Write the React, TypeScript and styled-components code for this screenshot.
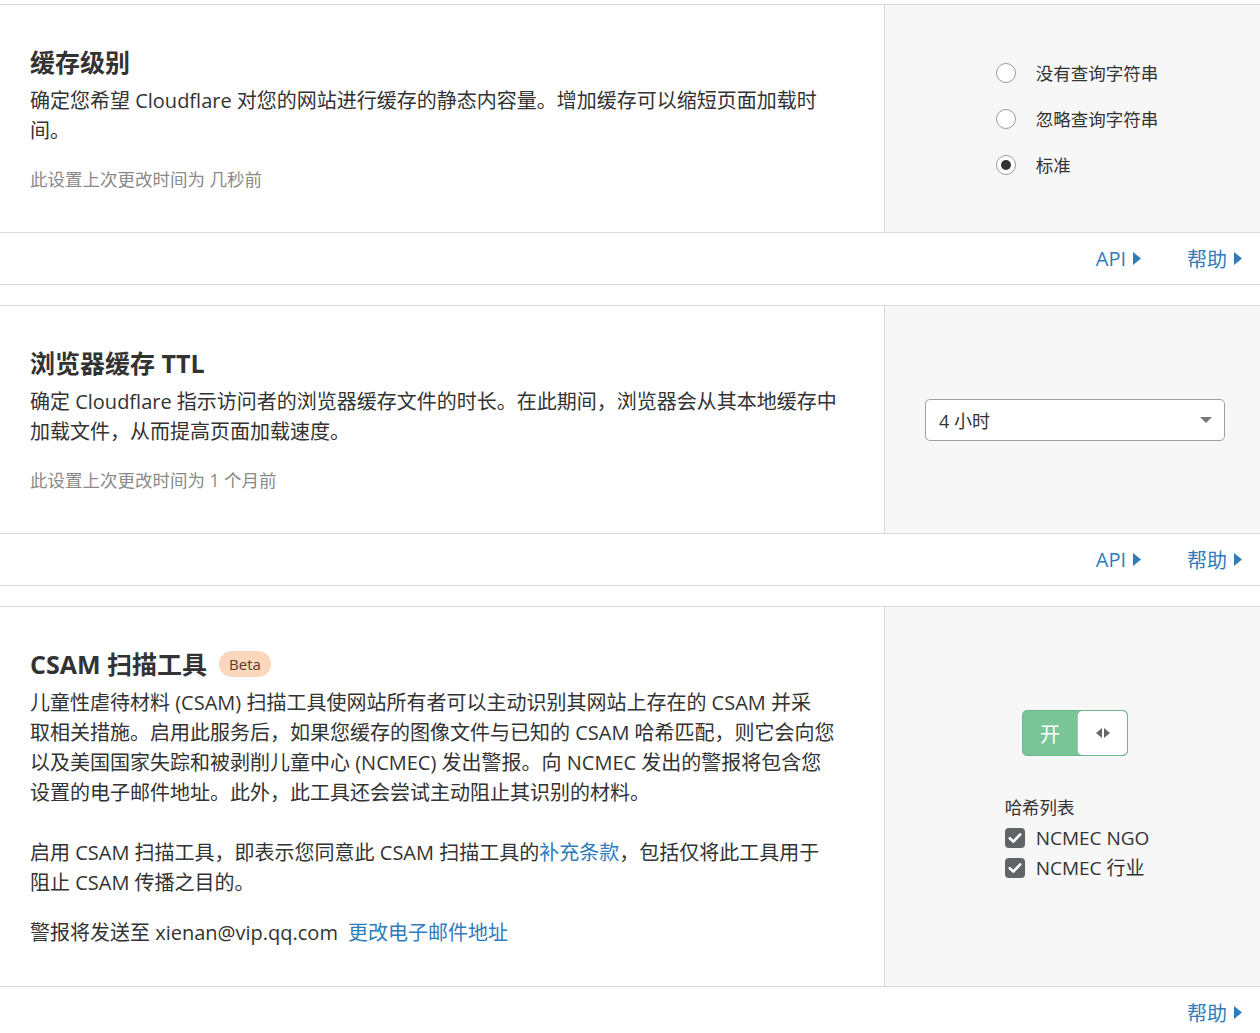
import styled, { createGlobalStyle } from "styled-components";

const GlobalStyle = createGlobalStyle`
  html, body {
    margin: 0;
    padding: 0;
    background: #ffffff;
  }
  body {
    font-family: "Open Sans", "Noto Sans CJK SC", sans-serif;
    color: #333333;
  }
  * {
    box-sizing: border-box;
  }
`;

const Page = styled.div`
  padding-top: 4px;
  width: 1260px;
`;

const Card = styled.section`
  border-top: 1px solid #d9d9d9;
  border-bottom: 1px solid #d9d9d9;
  margin-bottom: 20px;
  background: #fff;
`;

const CardBody = styled.div`
  display: grid;
  grid-template-columns: 884px 1fr;
`;

const Main = styled.div`
  padding: 42px 30px 38px 30px;
`;

const Title = styled.h2`
  margin: 0 0 9px;
  font-size: 25px;
  line-height: 30px;
  font-weight: 700;
  color: #333;
  display: flex;
  align-items: center;
`;

const Badge = styled.span`
  display: inline-block;
  margin-left: 12px;
  padding: 0 10px;
  height: 26px;
  line-height: 26px;
  border-radius: 13px;
  background: #fbd7bd;
  color: #5a3a28;
  font-size: 15px;
  font-weight: 400;
`;

const Text = styled.p<{ $gap?: number }>`
  margin: 0 0 ${({ $gap }) => $gap ?? 0}px;
  font-size: 20px;
  line-height: 30px;
  color: #333;
`;

const Meta = styled.div`
  margin-top: 18px;
  font-size: 17.5px;
  line-height: 30px;
  color: #8a8a8a;
`;

const Link = styled.a<{ $spaced?: boolean }>`
  color: #2f7cba;
  text-decoration: none;
  cursor: pointer;
  margin-left: ${({ $spaced }) => ($spaced ? "5px" : "0")};
`;

const Side = styled.div`
  background: #f7f7f7;
  border-left: 1px solid #d9d9d9;
  padding-left: 5px;
  display: flex;
  flex-direction: column;
  align-items: center;
  justify-content: center;
`;

const RadioList = styled.div`
  display: flex;
  flex-direction: column;
  gap: 16px;
  margin-left: 4px;
`;

const RadioRow = styled.label`
  display: flex;
  align-items: center;
  gap: 20px;
  font-size: 17.5px;
  line-height: 30px;
  color: #333;
`;

const RadioDot = styled.span<{ $checked?: boolean }>`
  width: 20px;
  height: 20px;
  border-radius: 50%;
  border: 1px solid #9a9a9a;
  background: #fff;
  display: flex;
  align-items: center;
  justify-content: center;
  &::after {
    content: "";
    width: 10px;
    height: 10px;
    border-radius: 50%;
    background: ${({ $checked }) => ($checked ? "#333" : "transparent")};
  }
`;

const Select = styled.div`
  width: 300px;
  height: 42px;
  border: 1px solid #9ea1a3;
  border-radius: 5px;
  background: #fff;
  display: flex;
  align-items: center;
  justify-content: space-between;
  padding: 0 12px 0 13px;
  font-size: 18px;
  color: #333;
`;

const Caret = styled.span`
  width: 0;
  height: 0;
  border-left: 6px solid transparent;
  border-right: 6px solid transparent;
  border-top: 6px solid #777;
`;

const Toggle = styled.div`
  display: flex;
  width: 106px;
  height: 46px;
  border-radius: 5px;
  overflow: hidden;
  background: #79c598;
  border: 1px solid #6db88c;
`;

const ToggleOn = styled.span`
  width: 54px;
  display: flex;
  align-items: center;
  justify-content: center;
  color: #fff;
  font-size: 20px;
`;

const ToggleKnob = styled.span`
  flex: 1;
  background: #fff;
  border-radius: 5px;
  border-left: 1px solid #b5bdb8;
  display: flex;
  align-items: center;
  justify-content: center;
`;

const HashGroup = styled.div`
  margin-top: 36px;
  margin-left: 4px;
  display: flex;
  flex-direction: column;
`;

const HashLabel = styled.div`
  font-size: 17.5px;
  line-height: 30px;
  color: #333;
  margin-bottom: 1px;
`;

const CheckRow = styled.label`
  display: flex;
  align-items: center;
  gap: 11px;
  font-size: 19px;
  line-height: 30px;
  color: #333;
`;

const CheckBox = styled.span`
  width: 20px;
  height: 20px;
  border-radius: 4px;
  background: #5f6467;
  display: flex;
  align-items: center;
  justify-content: center;
`;

const Footer = styled.div`
  border-top: 1px solid #d9d9d9;
  height: 52px;
  display: flex;
  align-items: center;
  justify-content: flex-end;
  gap: 46px;
  padding-right: 18px;
`;

const FooterLink = styled.a`
  color: #2f7cba;
  font-size: 20px;
  text-decoration: none;
  display: flex;
  align-items: center;
  gap: 7px;
`;

const Arrow = () => (
  <svg width="8" height="13" viewBox="0 0 8 13">
    <path d="M0 0 L8 6.5 L0 13 Z" fill="#2f7cba" />
  </svg>
);

const Check = () => (
  <svg width="14" height="12" viewBox="0 0 14 12">
    <path
      d="M1.8 6.2 L5.4 9.6 L12.2 2.4"
      fill="none"
      stroke="#fff"
      strokeWidth="2.6"
      strokeLinecap="round"
      strokeLinejoin="round"
    />
  </svg>
);

const Grip = () => (
  <svg width="14" height="10" viewBox="0 0 14 10">
    <path d="M6 0 L0 5 L6 10 Z" fill="#666" />
    <path d="M8 0 L14 5 L8 10 Z" fill="#666" />
  </svg>
);

const CardFooter = ({ api }: { api?: boolean }) => (
  <Footer>
    {api && (
      <FooterLink>
        API <Arrow />
      </FooterLink>
    )}
    <FooterLink>
      帮助 <Arrow />
    </FooterLink>
  </Footer>
);

const radios = [
  { label: "没有查询字符串", checked: false },
  { label: "忽略查询字符串", checked: false },
  { label: "标准", checked: true },
];

const App = () => {
  return (
    <Page>
      <GlobalStyle />

      <Card>
        <CardBody>
          <Main>
            <Title>缓存级别</Title>
            <Text>
              确定您希望 Cloudflare 对您的网站进行缓存的静态内容量。增加缓存可以缩短页面加载时
              <br />
              间。
            </Text>
            <Meta>此设置上次更改时间为 几秒前</Meta>
          </Main>
          <Side>
            <RadioList>
              {radios.map((r) => (
                <RadioRow key={r.label}>
                  <RadioDot $checked={r.checked} />
                  {r.label}
                </RadioRow>
              ))}
            </RadioList>
          </Side>
        </CardBody>
        <CardFooter api />
      </Card>

      <Card>
        <CardBody>
          <Main>
            <Title>浏览器缓存 TTL</Title>
            <Text>
              确定 Cloudflare 指示访问者的浏览器缓存文件的时长。在此期间，浏览器会从其本地缓存中
              <br />
              加载文件，从而提高页面加载速度。
            </Text>
            <Meta>此设置上次更改时间为 1 个月前</Meta>
          </Main>
          <Side>
            <Select>
              <span>4 小时</span>
              <Caret />
            </Select>
          </Side>
        </CardBody>
        <CardFooter api />
      </Card>

      <Card>
        <CardBody>
          <Main>
            <Title>
              CSAM 扫描工具<Badge>Beta</Badge>
            </Title>
            <Text $gap={30}>
              儿童性虐待材料 (CSAM) 扫描工具使网站所有者可以主动识别其网站上存在的 CSAM 并采
              <br />
              取相关措施。启用此服务后，如果您缓存的图像文件与已知的 CSAM 哈希匹配，则它会向您
              <br />
              以及美国国家失踪和被剥削儿童中心 (NCMEC) 发出警报。向 NCMEC 发出的警报将包含您
              <br />
              设置的电子邮件地址。此外，此工具还会尝试主动阻止其识别的材料。
            </Text>
            <Text $gap={20}>
              启用 CSAM 扫描工具，即表示您同意此 CSAM 扫描工具的<Link>补充条款</Link>，包括仅将此工具用于
              <br />
              阻止 CSAM 传播之目的。
            </Text>
            <Text>
              警报将发送至 xienan@vip.qq.com<Link $spaced> 更改电子邮件地址</Link>
            </Text>
          </Main>
          <Side>
            <Toggle>
              <ToggleOn>开</ToggleOn>
              <ToggleKnob>
                <Grip />
              </ToggleKnob>
            </Toggle>
            <HashGroup>
              <HashLabel>哈希列表</HashLabel>
              <CheckRow>
                <CheckBox>
                  <Check />
                </CheckBox>
                NCMEC NGO
              </CheckRow>
              <CheckRow>
                <CheckBox>
                  <Check />
                </CheckBox>
                NCMEC 行业
              </CheckRow>
            </HashGroup>
          </Side>
        </CardBody>
        <CardFooter />
      </Card>
    </Page>
  );
};

export default App;
